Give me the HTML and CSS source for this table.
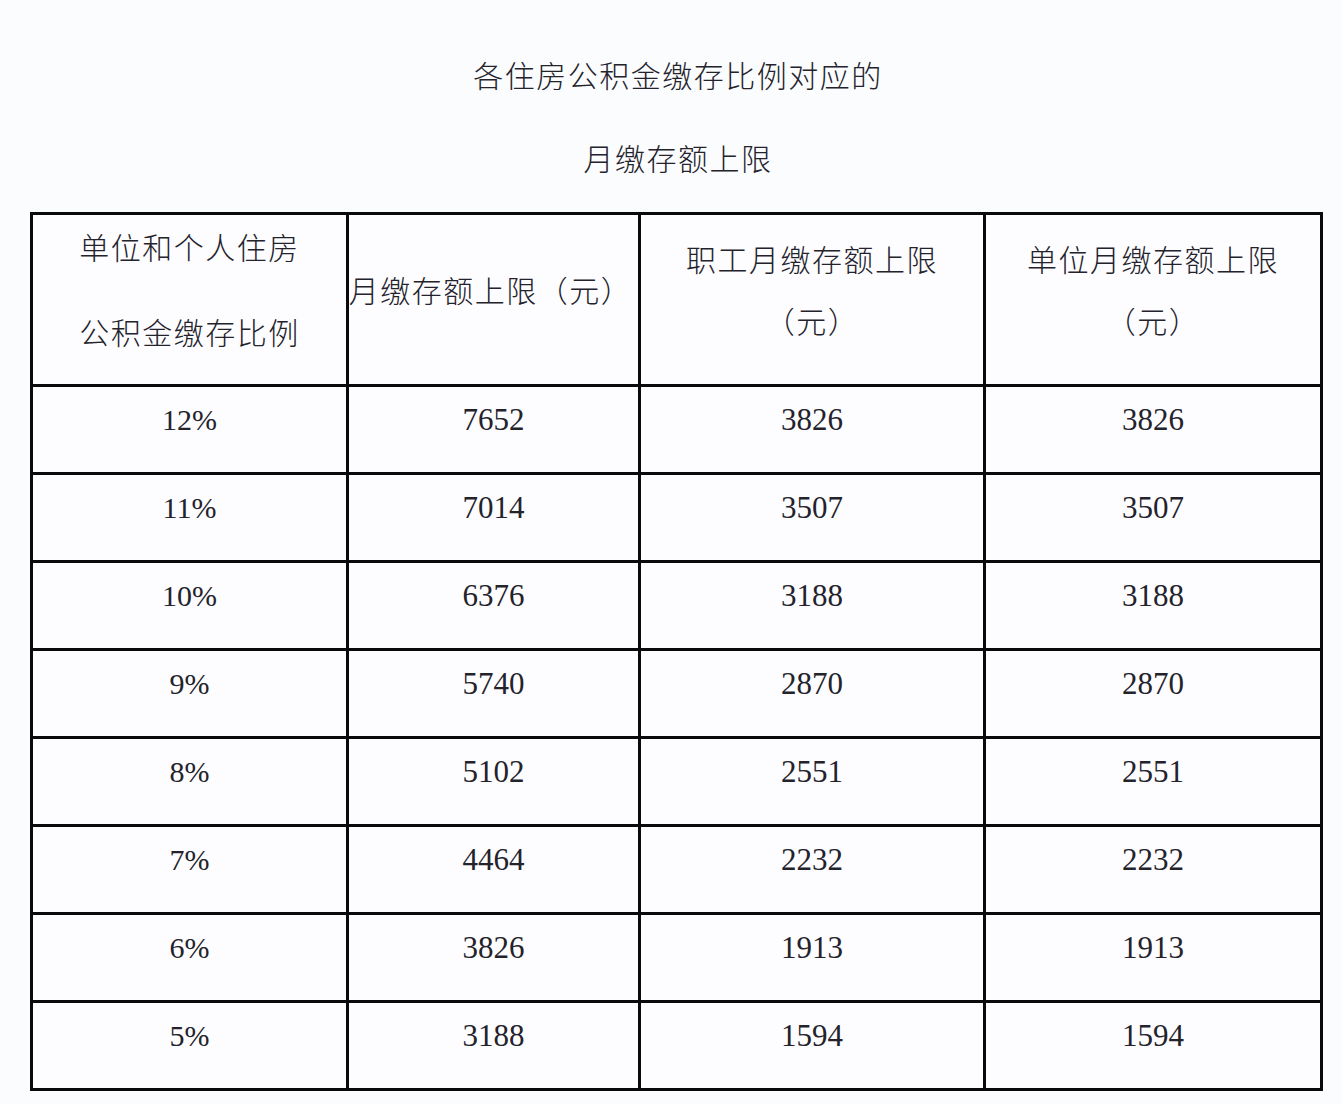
FILE: index.html
```html
<!DOCTYPE html>
<html lang="zh-CN">
<head>
<meta charset="utf-8">
<title>各住房公积金缴存比例对应的月缴存额上限</title>
<link rel="stylesheet" href="styles.css">
</head>
<body>
<div class="page">
  <div class="title">
    <div class="title-line">各住房公积金缴存比例对应的</div>
    <div class="title-line">月缴存额上限</div>
  </div>
  <table class="grid">
    <colgroup>
      <col class="c1"><col class="c2"><col class="c3"><col class="c4">
    </colgroup>
    <thead>
      <tr class="head">
        <th><div class="h-tall">单位和个人住房<br>公积金缴存比例</div></th>
        <th><div class="h-one">月缴存额上限（元）</div></th>
        <th><div class="h-two">职工月缴存额上限<br>（元）</div></th>
        <th><div class="h-two">单位月缴存额上限<br>（元）</div></th>
      </tr>
    </thead>
    <tbody>
      <tr><td class="pct">12%</td><td>7652</td><td>3826</td><td>3826</td></tr>
      <tr><td class="pct">11%</td><td>7014</td><td>3507</td><td>3507</td></tr>
      <tr><td class="pct">10%</td><td>6376</td><td>3188</td><td>3188</td></tr>
      <tr><td class="pct">9%</td><td>5740</td><td>2870</td><td>2870</td></tr>
      <tr><td class="pct">8%</td><td>5102</td><td>2551</td><td>2551</td></tr>
      <tr><td class="pct">7%</td><td>4464</td><td>2232</td><td>2232</td></tr>
      <tr><td class="pct">6%</td><td>3826</td><td>1913</td><td>1913</td></tr>
      <tr><td class="pct">5%</td><td>3188</td><td>1594</td><td>1594</td></tr>
    </tbody>
  </table>
</div>
</body>
</html>
```

FILE: styles.css
```css
html, body {
  margin: 0;
  padding: 0;
  background: #fbfcfe;
}

.page {
  width: 1290px;
  margin-left: 30px;
  padding-top: 33px;
  color: #24232c;
  font-family: "Noto Sans CJK SC", "Noto Sans", sans-serif;
}

.title {
  text-align: center;
  font-size: 30px;
  font-weight: 300;
  letter-spacing: 1.5px;
  line-height: 83px;
  margin-bottom: 13px;
  padding-left: 6px;
}

.grid {
  width: 1290px;
  border-collapse: collapse;
  table-layout: fixed;
  border: 3px solid #0a0a0c;
  background: #fdfdff;
}

.c1 { width: 316px; }
.c2 { width: 292px; }
.c3 { width: 345px; }
.c4 { width: 337px; }

.grid th,
.grid td {
  border: 3px solid #0a0a0c;
  text-align: center;
  padding: 0;
  box-sizing: border-box;
}

.grid th {
  height: 172px;
  font-weight: 300;
  font-size: 30px;
  letter-spacing: 1.5px;
  padding-bottom: 22px;
  white-space: nowrap;
}

.h-tall { line-height: 85px; margin: -14px 0; }
.h-two { line-height: 62px; }
.h-one { line-height: 40px; margin-left: -22px; margin-right: -16px; }

.grid td {
  height: 88px;
  padding-bottom: 20px;
  font-family: "Liberation Serif", "Times New Roman", serif;
  font-size: 31px;
  line-height: 40px;
}

.grid td.pct {
  font-size: 30px;
}
```
